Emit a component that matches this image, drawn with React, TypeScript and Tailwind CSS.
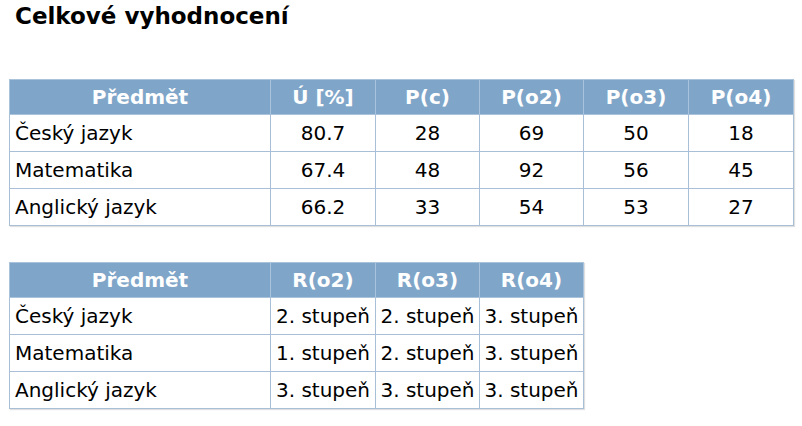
import React from "react";

const t1 = [
  ["Český jazyk", "80.7", "28", "69", "50", "18"],
  ["Matematika", "67.4", "48", "92", "56", "45"],
  ["Anglický jazyk", "66.2", "33", "54", "53", "27"],
];
const t2 = [
  ["Český jazyk", "2. stupeň", "2. stupeň", "3. stupeň"],
  ["Matematika", "1. stupeň", "2. stupeň", "3. stupeň"],
  ["Anglický jazyk", "3. stupeň", "3. stupeň", "3. stupeň"],
];

function Table({ head, rows, widths }: { head: string[]; rows: string[][]; widths: number[] }) {
  const total = widths.reduce((a, b) => a + b, 0);
  return (
    <table
      className="table-fixed border-collapse border border-[#a9bfd8] text-[20px] text-black shadow-[1px_1px_1px_rgba(0,0,0,0.12)]"
      style={{ width: total }}
    >
      <colgroup>
        {widths.map((w, i) => (
          <col key={i} style={{ width: w }} />
        ))}
      </colgroup>
      <thead>
        <tr className="h-[35px] bg-[#7fa6c9]">
          {head.map((h, i) => (
            <th key={i} className="border border-[#a9c3dd] p-0 text-center font-bold leading-none text-white">
              {h}
            </th>
          ))}
        </tr>
      </thead>
      <tbody>
        {rows.map((r, ri) => (
          <tr key={ri} className="h-[37px]">
            {r.map((c, ci) => (
              <td
                key={ci}
                className={
                  ci === 0
                    ? "border border-[#a9bfd8] py-0 pl-[5px] text-left leading-none whitespace-nowrap"
                    : "border border-[#a9bfd8] p-0 text-center leading-none whitespace-nowrap"
                }
              >
                {c}
              </td>
            ))}
          </tr>
        ))}
      </tbody>
    </table>
  );
}

export default function App() {
  return (
    <div className="w-[802px] h-[426px] bg-white pl-[9px] pt-[3px]" style={{ fontFamily: '"DejaVu Sans", sans-serif' }}>
      <h1 className="pl-[6px] text-[23px] font-bold leading-[27px] text-black">Celkové vyhodnocení</h1>
      <div className="mt-[49px]">
        <Table head={["Předmět", "Ú [%]", "P(c)", "P(o2)", "P(o3)", "P(o4)"]} rows={t1} widths={[261, 105, 104, 104, 105, 105]} />
      </div>
      <div className="mt-[36px]">
        <Table head={["Předmět", "R(o2)", "R(o3)", "R(o4)"]} rows={t2} widths={[261, 105, 104, 104]} />
      </div>
    </div>
  );
}
